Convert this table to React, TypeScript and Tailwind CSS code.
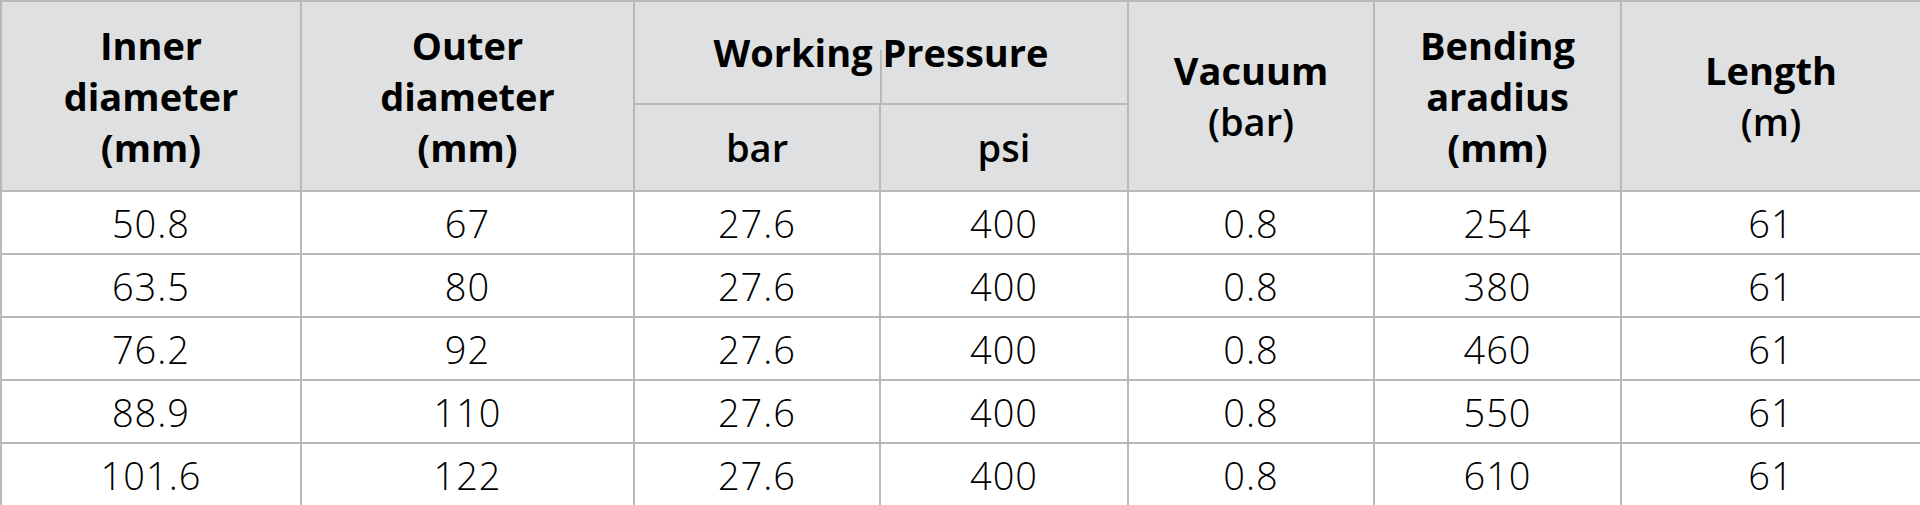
const rows = [
  ['50.8', '67', '27.6', '400', '0.8', '254', '61'],
  ['63.5', '80', '27.6', '400', '0.8', '380', '61'],
  ['76.2', '92', '27.6', '400', '0.8', '460', '61'],
  ['88.9', '110', '27.6', '400', '0.8', '550', '61'],
  ['101.6', '122', '27.6', '400', '0.8', '610', '61'],
];

const th = 'border-2 border-[#b9b9bb] bg-[#dfe0e2] text-center align-middle text-[38px] leading-[51px] text-black';

export default function App() {
  return (
    <div className="w-[1920px] h-[505px] bg-white overflow-hidden" style={{ fontFamily: '"Open Sans", "Liberation Sans", sans-serif' }}>
      <table className="w-full table-fixed border-collapse">
        <colgroup>
          <col className="w-[300px]" />
          <col className="w-[333px]" />
          <col className="w-[246px]" />
          <col className="w-[248px]" />
          <col className="w-[246px]" />
          <col className="w-[247px]" />
          <col className="w-[300px]" />
        </colgroup>
        <thead>
          <tr className="h-[103px]">
            <th rowSpan={2} className={`${th} font-bold`}>Inner<br />diameter<br />(mm)</th>
            <th rowSpan={2} className={`${th} font-bold`}>Outer<br />diameter<br />(mm)</th>
            <th colSpan={2} className={`${th} font-bold relative`}>
              {/* stray divider line poking up into the merged cell */}
              <span className="absolute left-1/2 top-[48px] bottom-0 w-[2px] -ml-px bg-[#b9b9bb]" />
              <span className="relative">Working Pressure</span>
            </th>
            <th rowSpan={2} className={`${th} font-bold`}>Vacuum<br /><span className="font-semibold">(bar)</span></th>
            <th rowSpan={2} className={`${th} font-bold`}>Bending<br />aradius<br />(mm)</th>
            <th rowSpan={2} className={`${th} font-bold`}>Length<br /><span className="font-semibold">(m)</span></th>
          </tr>
          <tr className="h-[87px]">
            <th className={`${th} font-semibold`}>bar</th>
            <th className={`${th} font-semibold`}>psi</th>
          </tr>
        </thead>
        <tbody>
          {rows.map((r, i) => (
            <tr key={i} className="h-[63px]">
              {r.map((v, j) => (
                <td key={j} className="border-2 border-[#b9b9bb] text-center align-middle font-light text-[38px] leading-none tracking-[1px] text-black">
                  {v}
                </td>
              ))}
            </tr>
          ))}
        </tbody>
      </table>
    </div>
  );
}
